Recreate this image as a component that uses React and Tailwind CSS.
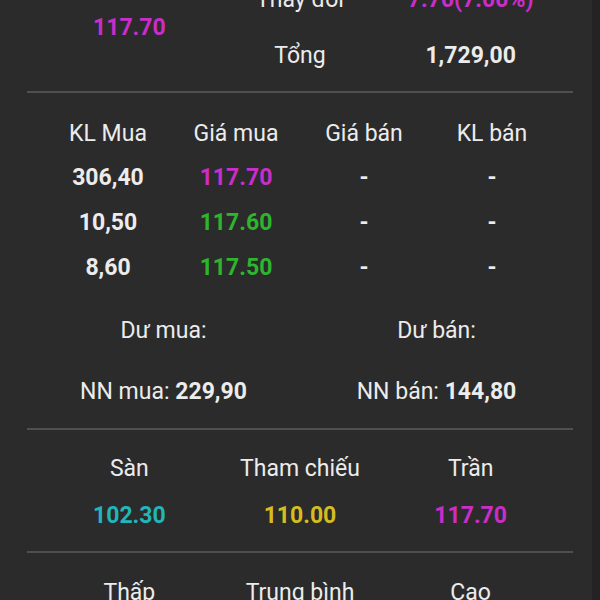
import React from "react";

const MAG = "text-[#c92ec9]";
const GRN = "text-[#2db52d]";

function Divider({ className = "" }) {
  return <div className={"mx-[27px] h-[2px] bg-[#4f4f4f] " + className} />;
}

export default function App() {
  const book = [
    ["306,40", "117.70", MAG],
    ["10,50", "117.60", GRN],
    ["8,60", "117.50", GRN],
  ];
  return (
    <div className="relative w-[600px] h-[600px] overflow-hidden bg-[#2b2b2b] font-['Roboto',sans-serif] text-[23px] leading-none text-[#ececec]">
      <div className="w-[600px]">
        {/* top summary */}
        <div className="-mt-[29px] grid grid-cols-3 grid-rows-[56px_56px] px-[44px]">
          <div className={"row-span-2 flex items-center justify-center font-bold " + MAG}>117.70</div>
          <div className="flex items-center justify-center">Thay đổi</div>
          <div className={"flex items-center justify-center font-bold " + MAG}>7.70(7.00%)</div>
          <div className="flex items-center justify-center">Tổng</div>
          <div className="flex items-center justify-center font-bold">1,729,00</div>
        </div>
        <Divider className="mt-[8px]" />

        {/* order book */}
        <div className="mt-[18px] px-[44px]">
          <div className="grid grid-cols-4 h-[44px] items-center text-center">
            <div>KL Mua</div>
            <div>Giá mua</div>
            <div>Giá bán</div>
            <div>KL bán</div>
          </div>
          {book.map(([kl, gia, c]) => (
            <div key={kl} className="grid grid-cols-4 h-[45px] items-center text-center font-bold">
              <div>{kl}</div>
              <div className={c}>{gia}</div>
              <div>-</div>
              <div>-</div>
            </div>
          ))}
        </div>

        {/* du / nn */}
        <div className="mt-[18px] mx-[27px] grid grid-cols-2 h-[44px] items-center text-center">
          <div>Dư mua:</div>
          <div>Dư bán:</div>
        </div>
        <div className="mt-[17px] mx-[27px] grid grid-cols-2 h-[44px] items-center text-center">
          <div>
            NN mua: <span className="font-bold">229,90</span>
          </div>
          <div>
            NN bán: <span className="font-bold">144,80</span>
          </div>
        </div>
        <Divider className="mt-[15px]" />

        {/* san / tham chieu / tran */}
        <div className="mt-[16px] px-[44px]">
          <div className="grid grid-cols-3 h-[44px] items-center text-center">
            <div>Sàn</div>
            <div>Tham chiếu</div>
            <div>Trần</div>
          </div>
          <div className="mt-[3px] grid grid-cols-3 h-[44px] items-center text-center font-bold">
            <div className="text-[#22b6b8]">102.30</div>
            <div className="text-[#d6bd1e]">110.00</div>
            <div className={MAG}>117.70</div>
          </div>
        </div>
        <Divider className="mt-[14px]" />

        <div className="mt-[17px] px-[44px] grid grid-cols-3 h-[44px] items-center text-center">
          <div>Thấp</div>
          <div>Trung bình</div>
          <div>Cao</div>
        </div>
      </div>
      <div className="absolute top-0 right-0 w-[8px] h-full bg-[#232323]" />
    </div>
  );
}
